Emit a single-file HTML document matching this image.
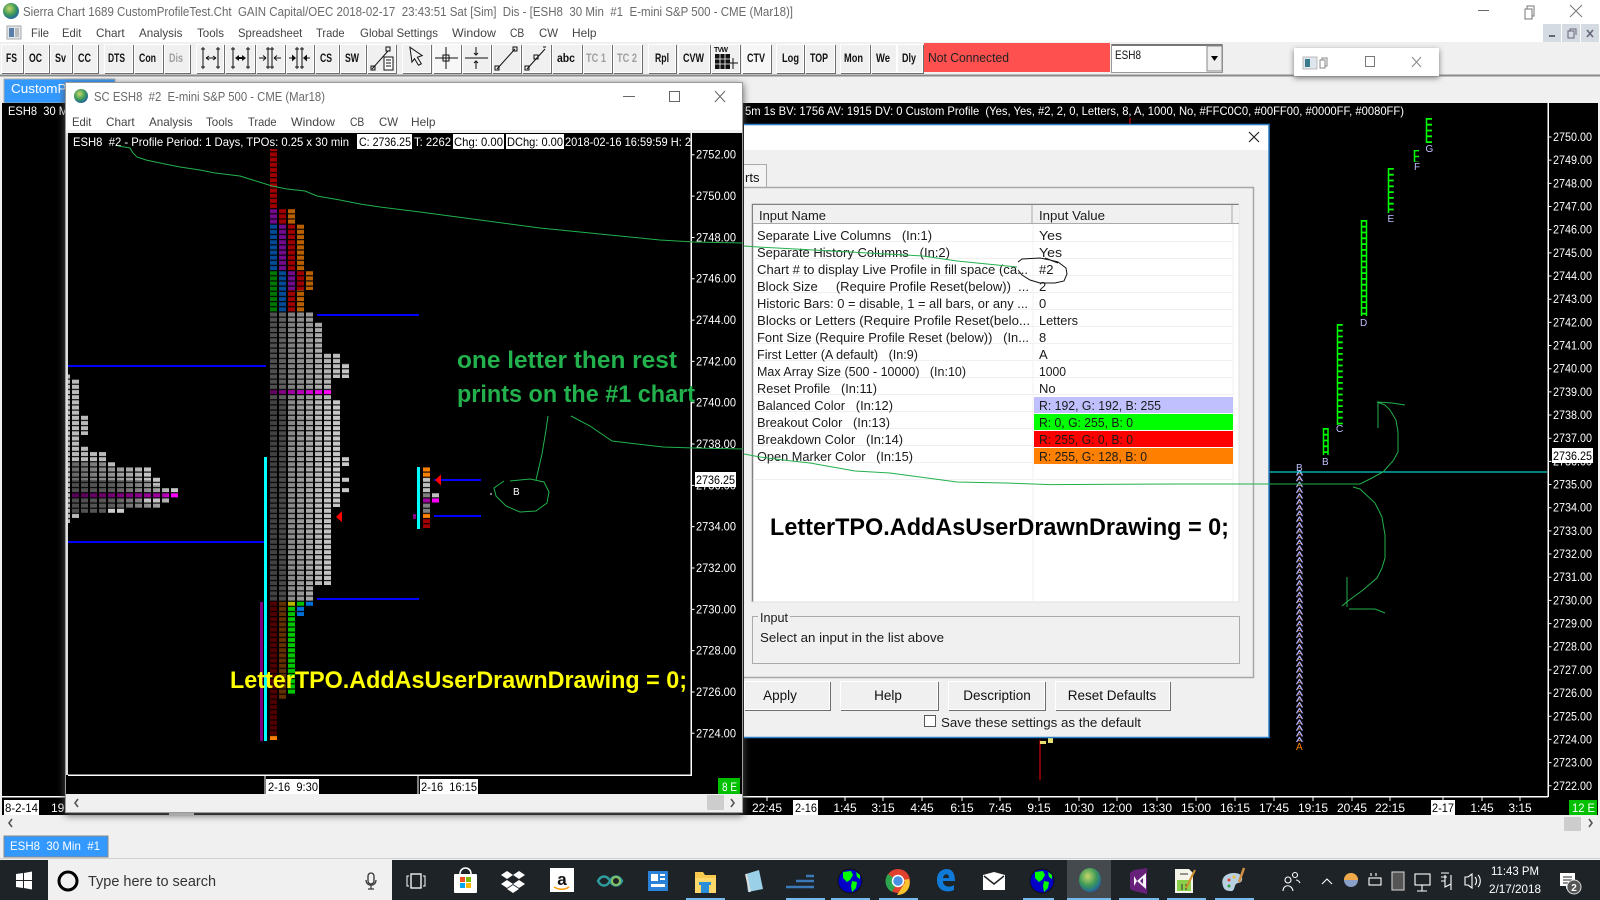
<!DOCTYPE html>
<html lang="en"><head><meta charset="utf-8"><title>Sierra Chart</title>
<style>
html,body{margin:0;padding:0;background:#f0f0f0;width:1600px;height:900px;overflow:hidden}
svg{display:block;position:absolute;left:0;top:0}
text{font-family:"Liberation Sans",sans-serif;font-size:12px;white-space:pre;fill:#fff}
.g{fill:#6a6a6a;font-size:12.5px}
.m{fill:#444;font-size:12px}
.tb{fill:#111;font-size:11.5px;font-weight:bold}
.dis{fill:#a0a0a0}
.k{fill:#000}
.l{fill:#1a1a1a;font-size:13px}
.bt{fill:#111;font-size:13.5px;text-anchor:middle}
.big{font-size:24px;font-weight:bold}
.tk{text-anchor:middle}
.ic{fill:none;stroke:#111;stroke-width:1}
.btn{filter:drop-shadow(1px 1px 0 #6e6e6e)}
.btn rect{fill:#f0f0f0;stroke:#fff;stroke-width:1}
.gl{fill:none;stroke:#22b14c;stroke-width:1}
.tl{fill:#c0c0ff;font-size:10px}
.gb{fill:none;stroke:#0f0}
</style></head><body>
<svg width="1600" height="900" viewBox="0 0 1600 900" xmlns="http://www.w3.org/2000/svg">
<defs>
<pattern id="st" width="9" height="5.165" patternUnits="userSpaceOnUse"><rect y="1.5" width="9" height="1.1" fill="#000"/></pattern>
<linearGradient id="lg" gradientUnits="userSpaceOnUse" x1="68" y1="0" x2="178" y2="0"><stop offset="0" stop-color="#4a4a4a"/><stop offset=".4" stop-color="#5a5a5a"/><stop offset=".7" stop-color="#8c8c8c"/><stop offset="1" stop-color="#c8c8c8"/></linearGradient>
<linearGradient id="lg2" gradientUnits="userSpaceOnUse" x1="68" y1="0" x2="150" y2="0"><stop offset="0" stop-color="#606060"/><stop offset="1" stop-color="#c0c0c0"/></linearGradient>
<linearGradient id="lm" gradientUnits="userSpaceOnUse" x1="68" y1="0" x2="178" y2="0"><stop offset="0" stop-color="#500050"/><stop offset=".85" stop-color="#a000a0"/><stop offset="1" stop-color="#ff00ff"/></linearGradient>
<radialGradient id="gb" cx=".4" cy=".35" r=".7"><stop offset="0" stop-color="#c8d86a"/><stop offset=".55" stop-color="#3f9a58"/><stop offset="1" stop-color="#1d5fa8"/></radialGradient>
<pattern id="pa" width="7" height="5.8" patternUnits="userSpaceOnUse" x="1296" y="470"><path d="M.5 5.5L3.5 .5L6.5 5.5" fill="none" stroke="#b0b0ff" stroke-width="1.300"/><path d="M2 3.800H5" stroke="#c08040" stroke-width=".9"/></pattern>
</defs>

<!-- main window chrome -->
<rect width="1600" height="42" fill="#fff"/>
<rect y="42" width="1600" height="61" fill="#f0f0f0"/>
<circle cx="11" cy="11" r="8" fill="url(#gb)"/>
<text x="23" y="16" class="g" textLength="770" lengthAdjust="spacingAndGlyphs">Sierra Chart 1689 CustomProfileTest.Cht  GAIN Capital/OEC 2018-02-17  23:43:51 Sat [Sim]  Dis - [ESH8  30 Min  #1  E-mini S&amp;P 500 - CME (Mar18)]</text>
<path d="M1478 10.500H1489" stroke="#666" fill="none"/>
<path d="M1525 9h7v10h-7zM1527 9V6h7v10h-2" stroke="#777" fill="none"/>
<path d="M1570 5l12 12M1582 5l-12 12" stroke="#777" fill="none"/>
<rect x="7" y="26" width="14" height="13" fill="#dfe6ee" stroke="#aaa"/><rect x="9" y="28" width="5" height="9" fill="#5b7fa8"/><rect x="15" y="28" width="4" height="9" fill="#bbb"/>
<text x="31" y="37" class="m" textLength="18" lengthAdjust="spacingAndGlyphs">File</text>
<text x="62" y="37" class="m" textLength="19.400" lengthAdjust="spacingAndGlyphs">Edit</text>
<text x="96" y="37" class="m" textLength="28.600" lengthAdjust="spacingAndGlyphs">Chart</text>
<text x="139" y="37" class="m" textLength="43.400" lengthAdjust="spacingAndGlyphs">Analysis</text>
<text x="197" y="37" class="m" textLength="27" lengthAdjust="spacingAndGlyphs">Tools</text>
<text x="238" y="37" class="m" textLength="64.300" lengthAdjust="spacingAndGlyphs">Spreadsheet</text>
<text x="316" y="37" class="m" textLength="28.600" lengthAdjust="spacingAndGlyphs">Trade</text>
<text x="360" y="37" class="m" textLength="78" lengthAdjust="spacingAndGlyphs">Global Settings</text>
<text x="452" y="37" class="m" textLength="44" lengthAdjust="spacingAndGlyphs">Window</text>
<text x="510" y="37" class="m" textLength="14.300" lengthAdjust="spacingAndGlyphs">CB</text>
<text x="539" y="37" class="m" textLength="19" lengthAdjust="spacingAndGlyphs">CW</text>
<text x="572" y="37" class="m" textLength="24.500" lengthAdjust="spacingAndGlyphs">Help</text>
<rect x="1543" y="24" width="18" height="18" fill="#d5dbe3"/><rect x="1562" y="24" width="18" height="18" fill="#d5dbe3"/><rect x="1581" y="24" width="18" height="18" fill="#d5dbe3"/>
<path d="M1549 36h6" stroke="#667" stroke-width="2"/><path d="M1568 31h6v7h-6zM1570 31v-2h6v6" stroke="#667" fill="none"/><path d="M1587 30l6 7M1593 30l-6 7" stroke="#667" stroke-width="1.600"/>

<!-- toolbar -->
<g class="btn">
<rect x="1.500" y="44.500" width="21" height="28"/><rect x="24.500" y="44.500" width="24" height="28"/><rect x="50.500" y="44.500" width="21" height="28"/><rect x="73.500" y="44.500" width="24" height="28"/>
<rect x="104.500" y="44.500" width="28" height="28"/><rect x="134.500" y="44.500" width="28" height="28"/><rect x="164.500" y="44.500" width="25" height="28"/>
<rect x="196.500" y="44.500" width="27" height="28"/><rect x="225.500" y="44.500" width="29" height="28"/><rect x="256.500" y="44.500" width="28" height="28"/><rect x="286.500" y="44.500" width="27" height="28"/><rect x="315.500" y="44.500" width="23" height="28"/><rect x="340.500" y="44.500" width="25" height="28"/><rect x="367.500" y="44.500" width="28" height="28"/>
<rect x="402.500" y="44.500" width="28" height="28"/><rect x="433.500" y="44.500" width="27" height="28" style="fill:#f7f7f7"/><rect x="462.500" y="44.500" width="28" height="28"/><rect x="492.500" y="44.500" width="28" height="28"/><rect x="522.500" y="44.500" width="28" height="28"/><rect x="552.500" y="44.500" width="29" height="28"/><rect x="583.500" y="44.500" width="28" height="28"/><rect x="613.500" y="44.500" width="28" height="28"/>
<rect x="648.500" y="44.500" width="27" height="28"/><rect x="678.500" y="44.500" width="31" height="28"/><rect x="711.500" y="44.500" width="28" height="28"/><rect x="742.500" y="44.500" width="28" height="28" style="fill:#f7f7f7"/>
<rect x="776.500" y="44.500" width="27" height="28"/><rect x="805.500" y="44.500" width="29" height="28"/><rect x="840.500" y="44.500" width="29" height="28"/><rect x="871.500" y="44.500" width="25" height="28"/><rect x="897.500" y="44.500" width="25" height="28"/>
</g>
<text class="tb" x="6" y="62" textLength="11" lengthAdjust="spacingAndGlyphs">FS</text>
<text class="tb" x="29" y="62" textLength="13" lengthAdjust="spacingAndGlyphs">OC</text>
<text class="tb" x="55" y="62" textLength="11" lengthAdjust="spacingAndGlyphs">Sv</text>
<text class="tb" x="78" y="62" textLength="13" lengthAdjust="spacingAndGlyphs">CC</text>
<text class="tb" x="108" y="62" textLength="17" lengthAdjust="spacingAndGlyphs">DTS</text>
<text class="tb" x="139" y="62" textLength="17" lengthAdjust="spacingAndGlyphs">Con</text>
<text class="tb dis" x="169" y="62" textLength="14" lengthAdjust="spacingAndGlyphs">Dis</text>
<text class="tb" x="320" y="62" textLength="12" lengthAdjust="spacingAndGlyphs">CS</text>
<text class="tb" x="345" y="62" textLength="14" lengthAdjust="spacingAndGlyphs">SW</text>
<text class="tb" x="557" y="62" textLength="18" lengthAdjust="spacingAndGlyphs">abc</text>
<text class="tb dis" x="586" y="62" textLength="20" lengthAdjust="spacingAndGlyphs">TC 1</text>
<text class="tb dis" x="617" y="62" textLength="20" lengthAdjust="spacingAndGlyphs">TC 2</text>
<text class="tb" x="655" y="62" textLength="14" lengthAdjust="spacingAndGlyphs">Rpl</text>
<text class="tb" x="683" y="62" textLength="21" lengthAdjust="spacingAndGlyphs">CVW</text>
<text class="tb" x="747" y="62" textLength="18" lengthAdjust="spacingAndGlyphs">CTV</text>
<text class="tb" x="782" y="62" textLength="17" lengthAdjust="spacingAndGlyphs">Log</text>
<text class="tb" x="810" y="62" textLength="18" lengthAdjust="spacingAndGlyphs">TOP</text>
<text class="tb" x="844" y="62" textLength="19" lengthAdjust="spacingAndGlyphs">Mon</text>
<text class="tb" x="876" y="62" textLength="14" lengthAdjust="spacingAndGlyphs">We</text>
<text class="tb" x="902" y="62" textLength="14" lengthAdjust="spacingAndGlyphs">Dly</text>
<!-- toolbar icons -->
<path class="ic" d="M203 47v22M218 47v22M201 49h4M216 49h4M201 67h4M216 67h4M206 58h10M206 58l3-2M206 58l3 2M216 58l-3-2M216 58l-3 2"/>
<path class="ic" d="M233 47v22M248 47v22M231 49h4M246 49h4M231 67h4M246 67h4"/><path d="M235 58l4-3v2h3v-2l4 3-4 3v-2h-3v2z" fill="#111"/>
<path class="ic" d="M268 47v22M272 47v22M266 49h4M270 49h4M266 67h4M270 67h4M259 58h7M266 58l-3-2.500M266 58l-3 2.500M281 58h-7M274 58l3-2.500M274 58l3 2.500"/>
<path class="ic" d="M297 47v22M302 47v22M295 49h4M300 49h4M295 67h4M300 67h4M289 58h4M310 58h-4"/><path d="M296 58l-4-3.500v7zM303 58l4-3.500v7z" fill="#111"/>
<path class="ic" d="M372 69l16-18M371 66h4v4h-4zM386 47h4v4h-4z"/><rect x="384" y="57" width="9" height="13" fill="#fff" stroke="#111"/><path d="M386 60h5M386 63h5M386 66h5" stroke="#111"/>
<path class="ic" d="M411 47v15l3-3 3 7 3-1-3-7 5-1z" transform="rotate(-8 412 55)"/>
<path class="ic" d="M446 47v22M435 58h23"/><rect x="443" y="55" width="6" height="6" fill="none" stroke="#111"/>
<path class="ic" d="M465 58h23M476 47v8M476 69v-8M474 53l2 2 2-2M474 63l2-2 2 2"/>
<path class="ic" d="M497 69l18-20M495 66h4v4h-4zM513 47h4v4h-4z"/>
<path class="ic" d="M527 69l18-20M525 66h4v4h-4zM534 55h4v4h-4zM543 47h3"/>
<rect x="715" y="54" width="15" height="15" fill="#111"/><path d="M715 59h15M715 64h15M720 54v15M725 54v15" stroke="#fff" stroke-width=".8"/><path d="M728 63h10M733 58v11" stroke="#111"/>
<text x="714" y="52" style="font-size:7px;font-weight:bold;fill:#111" textLength="14">TVW</text>
<rect x="924" y="43" width="186" height="29" fill="#ff5050"/>
<text x="928" y="62" style="fill:#222;font-size:12.500px" textLength="81" lengthAdjust="spacingAndGlyphs">Not Connected</text>
<rect x="1111.500" y="44.500" width="111" height="28" fill="#fff" stroke="#999"/><rect x="1112" y="44" width="110" height="2" fill="#777"/>
<text x="1115" y="59" style="fill:#111;font-size:12px" textLength="26" lengthAdjust="spacingAndGlyphs">ESH8</text>
<rect x="1207" y="46" width="15" height="25" fill="#eee" stroke="#888"/><path d="M1211 56h7l-3.500 5z" fill="#000"/>
<rect y="74.500" width="1600" height="2" fill="#8a8a8a"/>
<rect x="1294" y="48" width="145" height="28" fill="#fff" style="filter:drop-shadow(0 2px 3px #777)"/>
<rect x="1303" y="57" width="14" height="12" fill="#dfe6ee" stroke="#bbb"/><rect x="1305" y="59" width="5" height="8" fill="#3a7a8a"/>
<path d="M1320 60h5v8h-5zM1322 60v-2h5v8h-2" stroke="#888" fill="none"/>
<rect x="1365.500" y="56.500" width="9" height="10" fill="none" stroke="#777"/><path d="M1412 57l9 10M1421 57l-9 10" stroke="#888" fill="none"/>

<!-- tab and main chart -->
<rect x="4" y="79" width="111" height="24" fill="#3399ff" stroke="#aaa"/>
<text x="11" y="93" style="font-size:12.500px" textLength="60" lengthAdjust="spacingAndGlyphs">CustomPr</text>
<rect x="2" y="103" width="1596" height="712" fill="#000"/>
<text x="8" y="115" textLength="60" lengthAdjust="spacingAndGlyphs">ESH8  30 M</text>
<text x="745" y="115" textLength="659" lengthAdjust="spacingAndGlyphs">5m 1s BV: 1756 AV: 1915 DV: 0 Custom Profile  (Yes, Yes, #2, 2, 0, Letters, 8, A, 1000, No, #FFC0C0, #00FF00, #0000FF, #0080FF)</text>
<path d="M1130 118v6" stroke="#f00"/>
<rect x="1547.500" y="103" width="1.500" height="694" fill="#fff"/>
<rect x="2" y="796" width="1546" height="1.500" fill="#fff"/>
<line x1="1550" x2="1550" y1="136.500" y2="790" stroke="#fff" stroke-width="3" stroke-dasharray="1 22.170"/>
<g>
<text x="1553" y="141" textLength="39" lengthAdjust="spacingAndGlyphs">2750.00</text>
<text x="1553" y="164.200" textLength="39" lengthAdjust="spacingAndGlyphs">2749.00</text>
<text x="1553" y="187.300" textLength="39" lengthAdjust="spacingAndGlyphs">2748.00</text>
<text x="1553" y="210.500" textLength="39" lengthAdjust="spacingAndGlyphs">2747.00</text>
<text x="1553" y="233.700" textLength="39" lengthAdjust="spacingAndGlyphs">2746.00</text>
<text x="1553" y="256.900" textLength="39" lengthAdjust="spacingAndGlyphs">2745.00</text>
<text x="1553" y="280" textLength="39" lengthAdjust="spacingAndGlyphs">2744.00</text>
<text x="1553" y="303.200" textLength="39" lengthAdjust="spacingAndGlyphs">2743.00</text>
<text x="1553" y="326.400" textLength="39" lengthAdjust="spacingAndGlyphs">2742.00</text>
<text x="1553" y="349.500" textLength="39" lengthAdjust="spacingAndGlyphs">2741.00</text>
<text x="1553" y="372.700" textLength="39" lengthAdjust="spacingAndGlyphs">2740.00</text>
<text x="1553" y="395.900" textLength="39" lengthAdjust="spacingAndGlyphs">2739.00</text>
<text x="1553" y="419" textLength="39" lengthAdjust="spacingAndGlyphs">2738.00</text>
<text x="1553" y="442.200" textLength="39" lengthAdjust="spacingAndGlyphs">2737.00</text>
<text x="1553" y="465.400" textLength="39" lengthAdjust="spacingAndGlyphs">2736.00</text>
<text x="1553" y="488.600" textLength="39" lengthAdjust="spacingAndGlyphs">2735.00</text>
<text x="1553" y="511.700" textLength="39" lengthAdjust="spacingAndGlyphs">2734.00</text>
<text x="1553" y="534.900" textLength="39" lengthAdjust="spacingAndGlyphs">2733.00</text>
<text x="1553" y="558.100" textLength="39" lengthAdjust="spacingAndGlyphs">2732.00</text>
<text x="1553" y="581.200" textLength="39" lengthAdjust="spacingAndGlyphs">2731.00</text>
<text x="1553" y="604.400" textLength="39" lengthAdjust="spacingAndGlyphs">2730.00</text>
<text x="1553" y="627.600" textLength="39" lengthAdjust="spacingAndGlyphs">2729.00</text>
<text x="1553" y="650.700" textLength="39" lengthAdjust="spacingAndGlyphs">2728.00</text>
<text x="1553" y="673.900" textLength="39" lengthAdjust="spacingAndGlyphs">2727.00</text>
<text x="1553" y="697.100" textLength="39" lengthAdjust="spacingAndGlyphs">2726.00</text>
<text x="1553" y="720.300" textLength="39" lengthAdjust="spacingAndGlyphs">2725.00</text>
<text x="1553" y="743.400" textLength="39" lengthAdjust="spacingAndGlyphs">2724.00</text>
<text x="1553" y="766.600" textLength="39" lengthAdjust="spacingAndGlyphs">2723.00</text>
<text x="1553" y="789.800" textLength="39" lengthAdjust="spacingAndGlyphs">2722.00</text>
</g>
<rect x="1552" y="448" width="41" height="15" fill="#fff"/><text x="1553" y="460" class="k" textLength="39" lengthAdjust="spacingAndGlyphs">2736.25</text>
<!-- main chart TPO columns -->
<path class="gb" stroke-width="1.500" d="M1426.500 118V143M1414.500 150V162M1388.500 168V213M1361.500 220V316M1366.500 220V316M1337.500 324V425M1323.500 428V455M1328 428V455"/>
<path d="M1429 118V143" stroke="#0f0" stroke-width="6" stroke-dasharray="1.800 4"/>
<path d="M1416.500 150V162" stroke="#0f0" stroke-width="5" stroke-dasharray="1.400 4.400"/>
<path d="M1391 168V213" stroke="#0f0" stroke-width="5.500" stroke-dasharray="1.800 4"/>
<path d="M1364 220V316" stroke="#0f0" stroke-width="6" stroke-dasharray="1.800 4"/>
<path d="M1340 324V425" stroke="#0f0" stroke-width="5.500" stroke-dasharray="1.800 4"/>
<path d="M1326 428V455" stroke="#0f0" stroke-width="5" stroke-dasharray="1.800 4"/>
<text x="1425.500" y="152" class="tl">G</text>
<text x="1414" y="170" class="tl">F</text>
<text x="1387.500" y="222" class="tl">E</text>
<text x="1360" y="326" class="tl">D</text>
<text x="1336" y="432" class="tl">C</text>
<text x="1322" y="465" class="tl">B</text>
<rect x="1296" y="470" width="7" height="272" fill="url(#pa)"/><text x="1296" y="471" class="tl">B</text><text x="1296" y="750" class="tl" style="fill:#ff8000">A</text>
<rect x="1269" y="471.500" width="278" height="1" fill="#0ff"/>
<path class="gl" d="M1244 484H1360L1370 479 1383 472 1393 461 1398 452V432L1396 420 1390 410 1385 405 1377 402 1392 403 1405 405M1378 402V428"/>
<path class="gl" d="M1353 487L1360 489 1375 503 1382 517 1385 535V558L1382 568 1377 578 1363 590 1348 601 1342 606M1347 577V607M1349 609H1375L1385 613"/>
<path d="M1040 740v40" stroke="#f00"/><path d="M1040 741h6v3h-6zM1048 738h5v5h-5z" fill="#e8e070"/>
<!-- main time axis -->
<text x="767" y="812" class="tk">22:45</text><text x="845" y="812" class="tk">1:45</text><text x="883" y="812" class="tk">3:15</text><text x="922" y="812" class="tk">4:45</text><text x="962" y="812" class="tk">6:15</text><text x="1000" y="812" class="tk">7:45</text><text x="1039" y="812" class="tk">9:15</text><text x="1079" y="812" class="tk">10:30</text><text x="1117" y="812" class="tk">12:00</text><text x="1157" y="812" class="tk">13:30</text><text x="1196" y="812" class="tk">15:00</text><text x="1235" y="812" class="tk">16:15</text><text x="1274" y="812" class="tk">17:45</text><text x="1313" y="812" class="tk">19:15</text><text x="1352" y="812" class="tk">20:45</text><text x="1390" y="812" class="tk">22:15</text><text x="1482" y="812" class="tk">1:45</text><text x="1520" y="812" class="tk">3:15</text>
<path d="M845 797v4M883 797v4M922 797v4M962 797v4M1000 797v4M1039 797v4M1079 797v4M1117 797v4M1157 797v4M1196 797v4M1235 797v4M1274 797v4M1313 797v4M1352 797v4M1390 797v4M1443 797v4M1482 797v4M1520 797v4M767 797v4" stroke="#fff"/>
<rect x="4" y="800" width="35" height="15" fill="#fff"/><text x="5" y="812" class="k" textLength="33" lengthAdjust="spacingAndGlyphs">8-2-14</text>
<text x="51" y="812">19</text>
<rect x="793" y="800" width="25" height="15" fill="#fff"/><text x="795" y="812" class="k" textLength="22" lengthAdjust="spacingAndGlyphs">2-16</text>
<rect x="1431" y="800" width="24" height="15" fill="#fff"/><text x="1432" y="812" class="k" textLength="22" lengthAdjust="spacingAndGlyphs">2-17</text>
<rect x="1569" y="800" width="28" height="15" fill="#00c000"/><text x="1572" y="812" textLength="23" lengthAdjust="spacingAndGlyphs">12 E</text>
<!-- lower strip -->
<rect y="815" width="1600" height="45" fill="#f0f0f0"/>
<path d="M12 819l-3 4 3 4" fill="none" stroke="#555" stroke-width="1.600"/>
<rect x="1564" y="817" width="17" height="14" fill="#cdcdcd"/><path d="M1589 819l3 4-3 4" fill="none" stroke="#555" stroke-width="1.600"/>
<rect x="4" y="836" width="104" height="21" fill="#3399ff" stroke="#888"/>
<text x="10" y="850" textLength="90" lengthAdjust="spacingAndGlyphs">ESH8  30 Min  #1</text>
<rect y="858" width="1600" height="1" fill="#d0d0d0"/>

<!-- SC window -->
<g>
<rect x="65" y="82" width="678" height="731" fill="#fff" style="filter:drop-shadow(0 2px 4px #555)"/>
<rect x="65.500" y="82.500" width="677" height="730" fill="#f0f0f0" stroke="#9a9a9a"/>
<rect x="66" y="83" width="676" height="47" fill="#fff"/>
<circle cx="81" cy="96" r="7" fill="url(#gb)"/>
<text x="94" y="101" class="g" textLength="231" lengthAdjust="spacingAndGlyphs">SC ESH8  #2  E-mini S&amp;P 500 - CME (Mar18)</text>
<path d="M623 96.500h12" stroke="#666"/><rect x="669.500" y="91.500" width="10" height="10" fill="none" stroke="#666"/><path d="M715 91l10 11M725 91l-10 11" stroke="#666" fill="none"/>
<text x="72" y="126" class="m" textLength="19.400" lengthAdjust="spacingAndGlyphs">Edit</text>
<text x="106" y="126" class="m" textLength="28.600" lengthAdjust="spacingAndGlyphs">Chart</text>
<text x="149" y="126" class="m" textLength="43.400" lengthAdjust="spacingAndGlyphs">Analysis</text>
<text x="206" y="126" class="m" textLength="27" lengthAdjust="spacingAndGlyphs">Tools</text>
<text x="248" y="126" class="m" textLength="28.600" lengthAdjust="spacingAndGlyphs">Trade</text>
<text x="291" y="126" class="m" textLength="44" lengthAdjust="spacingAndGlyphs">Window</text>
<text x="350" y="126" class="m" textLength="14.300" lengthAdjust="spacingAndGlyphs">CB</text>
<text x="379" y="126" class="m" textLength="19" lengthAdjust="spacingAndGlyphs">CW</text>
<text x="411" y="126" class="m" textLength="24.500" lengthAdjust="spacingAndGlyphs">Help</text>
<rect x="66" y="133" width="676" height="661" fill="#000"/>
<rect x="66" y="133" width="2" height="642" fill="#ddd"/>
<rect x="68" y="774.500" width="623" height="1.500" fill="#fff"/>
<rect x="690.500" y="133" width="1.500" height="643" fill="#fff"/>
<line x1="693" x2="693" y1="154.300" y2="740" stroke="#fff" stroke-width="3" stroke-dasharray="1 40.320"/>

<!-- TPO left profile -->
<g>
<rect x="68" y="374" width="2" height="149" fill="#bbb"/>
<rect x="72" y="379" width="7" height="83" fill="#bbb"/>
<rect x="81" y="415" width="7" height="20" fill="#bbb"/><rect x="81" y="446" width="7" height="16" fill="#bbb"/>
<rect x="90" y="452" width="7" height="10" fill="#bbb"/><rect x="99" y="452" width="7" height="10" fill="#bbb"/><rect x="108" y="462" width="7" height="5" fill="#bbb"/>
<rect x="72" y="462" width="7" height="18" fill="url(#lg2)"/><rect x="81" y="462" width="7" height="18" fill="url(#lg2)"/><rect x="90" y="462" width="7" height="18" fill="url(#lg2)"/><rect x="99" y="462" width="7" height="18" fill="url(#lg2)"/><rect x="108" y="467" width="7" height="13" fill="url(#lg2)"/><rect x="117" y="467" width="7" height="13" fill="url(#lg2)"/><rect x="126" y="467" width="7" height="13" fill="url(#lg2)"/><rect x="135" y="467" width="7" height="13" fill="url(#lg2)"/><rect x="144" y="467" width="7" height="13" fill="#c4c4c4"/><rect x="153" y="477" width="7" height="8" fill="#c4c4c4"/>
<rect x="72" y="480" width="7" height="38" fill="url(#lg)"/><rect x="81" y="480" width="7" height="33" fill="url(#lg)"/><rect x="90" y="480" width="7" height="33" fill="url(#lg)"/><rect x="99" y="480" width="7" height="33" fill="url(#lg)"/><rect x="108" y="480" width="7" height="33" fill="url(#lg)"/><rect x="117" y="480" width="7" height="33" fill="url(#lg)"/><rect x="126" y="480" width="7" height="28" fill="url(#lg)"/><rect x="135" y="480" width="7" height="28" fill="url(#lg)"/><rect x="144" y="480" width="7" height="28" fill="url(#lg)"/><rect x="153" y="485" width="7" height="23" fill="url(#lg)"/><rect x="162" y="488" width="7" height="15" fill="url(#lg)"/><rect x="171" y="488" width="7" height="5" fill="#c8c8c8"/>
<rect x="72" y="493" width="97" height="5" fill="url(#lm)"/><rect x="171" y="493" width="7" height="5" fill="#f0f"/>
<path d="M79 488v30M88 488v30M97 488v30M106 488v30M115 488v30M124 488v30M133 488v30M142 488v30M151 488v30M160 488v30" stroke="#000" stroke-width="2" transform="translate(1 0)"/>
<rect x="72" y="513" width="7" height="5" fill="#bbb"/><rect x="108" y="508" width="7" height="5" fill="#ccc"/><rect x="117" y="508" width="7" height="5" fill="#ccc"/><rect x="144" y="498" width="7" height="5" fill="#c4c4c4"/><rect x="153" y="498" width="7" height="5" fill="#c4c4c4"/>
</g>
<!-- TPO main profile -->
<g>
<rect x="270" y="149" width="7" height="60" fill="#a00000"/><rect x="270" y="209" width="7" height="15" fill="#720a8c"/><rect x="270" y="224" width="7" height="47" fill="#004a96"/><rect x="270" y="271" width="7" height="41" fill="#007800"/><rect x="270" y="312" width="7" height="88" fill="#505050"/><rect x="270" y="400" width="7" height="201" fill="#424242"/><rect x="270" y="601" width="7" height="134" fill="#500000"/><rect x="270" y="735" width="7" height="5" fill="#ff8000"/>
<rect x="279" y="209" width="7" height="15" fill="#a00000"/><rect x="279" y="224" width="7" height="47" fill="#720a8c"/><rect x="279" y="271" width="7" height="41" fill="#004a96"/><rect x="279" y="312" width="7" height="88" fill="#606060"/><rect x="279" y="400" width="7" height="201" fill="#4a4a4a"/><rect x="279" y="601" width="7" height="98" fill="#643000"/>
<rect x="288" y="209" width="7" height="15" fill="#b86000"/><rect x="288" y="224" width="7" height="47" fill="#a00000"/><rect x="288" y="271" width="7" height="19" fill="#720a8c"/><rect x="288" y="290" width="7" height="22" fill="#a00000"/><rect x="288" y="312" width="7" height="88" fill="#808080"/><rect x="288" y="400" width="7" height="201" fill="#8a8a8a"/><rect x="288" y="601" width="7" height="5" fill="#b8b800"/><rect x="288" y="606" width="7" height="88" fill="#00c800"/>
<rect x="297" y="224" width="7" height="47" fill="#b86000"/><rect x="297" y="271" width="7" height="19" fill="#a00000"/><rect x="297" y="290" width="7" height="22" fill="#b86000"/><rect x="297" y="312" width="7" height="88" fill="#8c8c8c"/><rect x="297" y="400" width="7" height="201" fill="#989898"/><rect x="297" y="601" width="7" height="5" fill="#00c000"/><rect x="297" y="606" width="7" height="10" fill="#0070d8"/>
<rect x="306" y="271" width="7" height="19" fill="#b86000"/><rect x="306" y="312" width="7" height="88" fill="#999"/><rect x="306" y="400" width="7" height="201" fill="#a8a8a8"/><rect x="306" y="601" width="7" height="5" fill="#0070d8"/>
<rect x="315" y="322" width="7" height="78" fill="#aaa"/><rect x="315" y="400" width="7" height="185" fill="#b8b8b8"/>
<rect x="324" y="353" width="7" height="47" fill="#b4b4b4"/><rect x="324" y="400" width="7" height="185" fill="#c4c4c4"/>
<rect x="333" y="353" width="7" height="25" fill="#bcbcbc"/><rect x="333" y="400" width="7" height="107" fill="#c8c8c8"/>
<rect x="342" y="363" width="7" height="15" fill="#c4c4c4"/><rect x="342" y="457" width="7" height="9" fill="#c8c8c8"/><rect x="342" y="477" width="7" height="5" fill="#c8c8c8"/><rect x="342" y="488" width="7" height="5" fill="#c8c8c8"/>
<rect x="270" y="390" width="7" height="5" fill="#600060"/><rect x="279" y="390" width="7" height="5" fill="#800080"/><rect x="288" y="390" width="7" height="5" fill="#a000a0"/><rect x="297" y="390" width="7" height="5" fill="#b800b8"/><rect x="306" y="390" width="7" height="5" fill="#d000d0"/><rect x="315" y="390" width="7" height="5" fill="#e800e8"/><rect x="324" y="390" width="7" height="5" fill="#f0f"/>
<!-- small right profile -->
<rect x="423" y="467" width="7" height="11" fill="#ff8000"/><rect x="423" y="478" width="7" height="15" fill="#c0c0c0"/><rect x="423" y="493" width="7" height="5" fill="#808080"/><rect x="432" y="493" width="7" height="5" fill="#c0c0c0"/><rect x="423" y="498" width="7" height="5" fill="#a000a0"/><rect x="432" y="498" width="7" height="5" fill="#f0f"/><rect x="423" y="503" width="7" height="10" fill="#808080"/><rect x="423" y="513" width="7" height="5" fill="#ff8000"/><rect x="423" y="518" width="7" height="10" fill="#a00000"/>
</g>
<rect x="68" y="149" width="375" height="592" fill="url(#st)"/>
<rect x="68" y="365" width="198" height="2" fill="#00f"/>
<rect x="68" y="541" width="196" height="2" fill="#00f"/>
<rect x="317" y="314" width="102" height="2" fill="#00f"/>
<rect x="317" y="598" width="102" height="2" fill="#00f"/>
<rect x="434" y="479" width="47" height="2" fill="#00f"/>
<rect x="434" y="515" width="47" height="2" fill="#00f"/>
<rect x="260" y="602" width="3" height="139" fill="#800080"/>
<rect x="264" y="457" width="3" height="284" fill="#0ff"/>
<rect x="417" y="467" width="3" height="62" fill="#0ff"/>
<rect x="413" y="514" width="3" height="5" fill="#800080"/>
<path d="M336 517l6-6v11zM435 480l6-5.500v11z" fill="#f00"/>

<!-- SC header text -->
<text x="73" y="146" textLength="276" lengthAdjust="spacingAndGlyphs">ESH8  #2 - Profile Period: 1 Days, TPOs: 0.25 x 30 min</text>
<rect x="357" y="134" width="55" height="15" fill="#fff"/><text x="359" y="146" class="k" textLength="52" lengthAdjust="spacingAndGlyphs">C: 2736.25</text>
<text x="414" y="146" textLength="37" lengthAdjust="spacingAndGlyphs">T: 2262</text>
<rect x="453" y="134" width="51" height="15" fill="#fff"/><text x="454" y="146" class="k" textLength="49" lengthAdjust="spacingAndGlyphs">Chg: 0.00</text>
<rect x="506" y="134" width="58" height="15" fill="#fff"/><text x="507" y="146" class="k" textLength="56" lengthAdjust="spacingAndGlyphs">DChg: 0.00</text>
<text x="565" y="146" textLength="126" lengthAdjust="spacingAndGlyphs">2018-02-16 16:59:59 H: 2</text>
<!-- SC axis -->
<text x="696" y="158.700" textLength="40" lengthAdjust="spacingAndGlyphs">2752.00</text>
<text x="696" y="200" textLength="40" lengthAdjust="spacingAndGlyphs">2750.00</text>
<text x="696" y="241.400" textLength="40" lengthAdjust="spacingAndGlyphs">2748.00</text>
<text x="696" y="282.700" textLength="40" lengthAdjust="spacingAndGlyphs">2746.00</text>
<text x="696" y="324" textLength="40" lengthAdjust="spacingAndGlyphs">2744.00</text>
<text x="696" y="365.400" textLength="40" lengthAdjust="spacingAndGlyphs">2742.00</text>
<text x="696" y="406.700" textLength="40" lengthAdjust="spacingAndGlyphs">2740.00</text>
<text x="696" y="448" textLength="40" lengthAdjust="spacingAndGlyphs">2738.00</text>
<text x="696" y="489.400" textLength="40" lengthAdjust="spacingAndGlyphs">2736.00</text>
<text x="696" y="530.700" textLength="40" lengthAdjust="spacingAndGlyphs">2734.00</text>
<text x="696" y="572" textLength="40" lengthAdjust="spacingAndGlyphs">2732.00</text>
<text x="696" y="613.300" textLength="40" lengthAdjust="spacingAndGlyphs">2730.00</text>
<text x="696" y="654.700" textLength="40" lengthAdjust="spacingAndGlyphs">2728.00</text>
<text x="696" y="696" textLength="40" lengthAdjust="spacingAndGlyphs">2726.00</text>
<text x="696" y="737.300" textLength="40" lengthAdjust="spacingAndGlyphs">2724.00</text>
<rect x="695" y="472" width="41" height="15" fill="#fff"/><text x="696" y="484" class="k" textLength="39" lengthAdjust="spacingAndGlyphs">2736.25</text>
<!-- SC bottom -->
<path d="M265 775v19M418 775v19" stroke="#fff"/>
<rect x="266" y="779" width="53" height="15" fill="#fff"/><text x="268" y="791" class="k" textLength="50" lengthAdjust="spacingAndGlyphs">2-16  9:30</text>
<rect x="420" y="779" width="58" height="15" fill="#fff"/><text x="421" y="791" class="k" textLength="56" lengthAdjust="spacingAndGlyphs">2-16  16:15</text>
<rect x="718" y="778" width="22" height="16" fill="#00c000"/><text x="722" y="791" textLength="15" lengthAdjust="spacingAndGlyphs">8 E</text>
<rect x="66" y="794" width="676" height="18" fill="#f0f0f0"/>
<path d="M78 799l-3 4 3 4M731 799l3 4-3 4" fill="none" stroke="#555" stroke-width="1.600"/>
<rect x="707" y="795" width="17" height="15" fill="#cdcdcd"/>
<rect x="169" y="813" width="25" height="2" fill="#aaa"/>
</g>

<!-- Green annotations over SC -->
<text x="457" y="368" class="big" style="fill:#22b14c" textLength="220" lengthAdjust="spacingAndGlyphs">one letter then rest</text>
<text x="457" y="402" class="big" style="fill:#22b14c" textLength="238" lengthAdjust="spacingAndGlyphs">prints on the #1 chart</text>
<text x="230" y="688" class="big" style="fill:#ff0" textLength="457" lengthAdjust="spacingAndGlyphs">LetterTPO.AddAsUserDrawnDrawing = 0;</text>
<path class="gl" d="M548 416L546 430 542 454 536 480"/>
<path class="gl" d="M510 481L530 479 544 482 549 492 547 503 536 511 520 512 506 506 496 496 494 488 504 481"/>
<path d="M490 494h2" stroke="#fff"/>
<text x="513" y="495" style="font-size:10px">B</text>
<path class="gl" d="M118 146L130 148 133 153 137 157 146 160 165 164 180 167 200 170 215 173 240 176 272 186 287 189 305 191 317 196 340 200 360 204 380 207 420 212 480 220 540 228 600 234 660 240 694 242 743 243"/>
<path class="gl" d="M571 416L590 426 612 441 663 447 694 448 743 449"/>

<!-- Dialog -->
<rect x="744" y="124" width="525" height="614" fill="#f0f0f0"/>
<path d="M744 124.500H1269V737.500H744" fill="none" stroke="#2b7fc8" stroke-width="1.500"/>
<rect x="744" y="125.500" width="524" height="24.500" fill="#fff"/>
<path d="M1249 132l10 10M1259 132l-10 10" stroke="#222" stroke-width="1.200"/>
<rect x="744" y="164" width="23" height="23" fill="#f4f4f4"/>
<path d="M744 164.500H766.500V187" fill="none" stroke="#aaa"/>
<text x="745" y="182" style="fill:#111;font-size:13px">rts</text>
<path d="M744 187.500H1253.500V677.500H744" fill="none" stroke="#a8a8a8" stroke-width="1.500"/>
<rect x="752" y="204" width="487" height="398" fill="#fff"/>
<path d="M752.500 602V204.500H1239" fill="none" stroke="#808080" stroke-width="1.500"/>
<path d="M1239 204V602H752" fill="none" stroke="#e0e0e0"/>
<rect x="753" y="205" width="486" height="19" fill="#f0f0f0"/>
<path d="M753 223.500H1239M1032 205V224M1232 205V224" stroke="#aaa"/>
<path d="M1033 224V602M1233 224V602" stroke="#f0f0f0"/>
<path d="M753 241.500H1233M753 258.500H1233M753 275.500H1233M753 292.500H1233M753 309.500H1233M753 326.500H1233M753 343.500H1233M753 360.500H1233M753 377.500H1233M753 394.500H1233M753 411.500H1233M753 428.500H1233M753 445.500H1233M753 462.500H1233M753 479.500H1233" stroke="#f0f0f0"/>
<rect x="1034" y="397" width="199" height="16" fill="#c0c0ff"/>
<rect x="1034" y="414" width="199" height="16" fill="#0f0"/>
<rect x="1034" y="431" width="199" height="16" fill="#f00"/>
<rect x="1034" y="448" width="199" height="16" fill="#ff8000"/>
<text x="759" y="220" class="l" textLength="67" lengthAdjust="spacingAndGlyphs">Input Name</text>
<text x="1039" y="220" class="l" textLength="66" lengthAdjust="spacingAndGlyphs">Input Value</text>
<text x="757" y="240" class="l" textLength="175" lengthAdjust="spacingAndGlyphs">Separate Live Columns   (In:1)</text>
<text x="757" y="257" class="l" textLength="193" lengthAdjust="spacingAndGlyphs">Separate History Columns   (In:2)</text>
<text x="757" y="274" class="l" textLength="271" lengthAdjust="spacingAndGlyphs">Chart # to display Live Profile in fill space (ca...</text>
<text x="757" y="291" class="l" textLength="272" lengthAdjust="spacingAndGlyphs">Block Size     (Require Profile Reset(below))  ...</text>
<text x="757" y="308" class="l" textLength="271" lengthAdjust="spacingAndGlyphs">Historic Bars: 0 = disable, 1 = all bars, or any ...</text>
<text x="757" y="325" class="l" textLength="273" lengthAdjust="spacingAndGlyphs">Blocks or Letters (Require Profile Reset(belo...</text>
<text x="757" y="342" class="l" textLength="272" lengthAdjust="spacingAndGlyphs">Font Size (Require Profile Reset (below))   (In...</text>
<text x="757" y="359" class="l" textLength="161" lengthAdjust="spacingAndGlyphs">First Letter (A default)   (In:9)</text>
<text x="757" y="376" class="l" textLength="209" lengthAdjust="spacingAndGlyphs">Max Array Size (500 - 10000)   (In:10)</text>
<text x="757" y="393" class="l" textLength="120" lengthAdjust="spacingAndGlyphs">Reset Profile   (In:11)</text>
<text x="757" y="410" class="l" textLength="136" lengthAdjust="spacingAndGlyphs">Balanced Color   (In:12)</text>
<text x="757" y="427" class="l" textLength="133" lengthAdjust="spacingAndGlyphs">Breakout Color   (In:13)</text>
<text x="757" y="444" class="l" textLength="146" lengthAdjust="spacingAndGlyphs">Breakdown Color   (In:14)</text>
<text x="757" y="461" class="l" textLength="156" lengthAdjust="spacingAndGlyphs">Open Marker Color   (In:15)</text>
<text x="1039" y="240" class="l" textLength="23" lengthAdjust="spacingAndGlyphs">Yes</text>
<text x="1039" y="257" class="l" textLength="23" lengthAdjust="spacingAndGlyphs">Yes</text>
<text x="1039" y="274" class="l">#2</text>
<text x="1039" y="291" class="l">2</text>
<text x="1039" y="308" class="l">0</text>
<text x="1039" y="325" class="l" textLength="39" lengthAdjust="spacingAndGlyphs">Letters</text>
<text x="1039" y="342" class="l">8</text>
<text x="1039" y="359" class="l">A</text>
<text x="1039" y="376" class="l" textLength="27" lengthAdjust="spacingAndGlyphs">1000</text>
<text x="1039" y="393" class="l">No</text>
<text x="1039" y="410" class="l" textLength="122" lengthAdjust="spacingAndGlyphs">R: 192, G: 192, B: 255</text>
<text x="1039" y="427" class="l" textLength="94" lengthAdjust="spacingAndGlyphs">R: 0, G: 255, B: 0</text>
<text x="1039" y="444" class="l" textLength="94" lengthAdjust="spacingAndGlyphs">R: 255, G: 0, B: 0</text>
<text x="1039" y="461" class="l" textLength="108" lengthAdjust="spacingAndGlyphs">R: 255, G: 128, B: 0</text>
<path d="M1018 262L1022 259 1040 258 1050 260 1058 262 1066 268 1067 274 1064 281 1055 283 1040 283 1030 280 1022 275 1018 270M1045 258L1058 263" fill="none" stroke="#111" stroke-width="1"/>
<path class="gl" d="M744 246L758 247 777 248 850 252 923 256 957 261 1017 267"/>
<path class="gl" d="M744 454L760 457 783 460 810 463 855 471 890 473 957 482 1005 483 1050 484.600 1180 484 1269 484"/>
<text x="770" y="535" class="big" style="fill:#000" textLength="459" lengthAdjust="spacingAndGlyphs">LetterTPO.AddAsUserDrawnDrawing = 0;</text>
<rect x="752.500" y="616.500" width="487" height="47" fill="none" stroke="#aaa"/>
<rect x="758" y="610" width="32" height="12" fill="#f0f0f0"/>
<text x="760" y="622" class="l" textLength="28" lengthAdjust="spacingAndGlyphs">Input</text>
<text x="760" y="642" class="l" textLength="184" lengthAdjust="spacingAndGlyphs">Select an input in the list above</text>
<g class="btn">
<rect x="744.500" y="681.500" width="85" height="28"/><rect x="840.500" y="681.500" width="97" height="28"/><rect x="948.500" y="681.500" width="96" height="28"/><rect x="1055.500" y="681.500" width="114" height="28"/>
</g>
<text x="780" y="700" class="bt">Apply</text><text x="888" y="700" class="bt">Help</text><text x="997" y="700" class="bt">Description</text><text x="1112" y="700" class="bt">Reset Defaults</text>
<rect x="924.500" y="715.500" width="11" height="11" fill="#fff" stroke="#555"/>
<text x="941" y="727" class="l" textLength="200" lengthAdjust="spacingAndGlyphs">Save these settings as the default</text>

<!-- Taskbar -->
<rect y="860" width="1600" height="40" fill="#1e2327"/>
<path d="M16 874l7-1v7h-7zM24 873l8-1.500V880h-8zM16 881h7v7l-7-1zM24 881h8v8.500l-8-1.500z" fill="#fff"/>
<rect x="48" y="860" width="344" height="40" fill="#f0f0f0"/>
<circle cx="68" cy="881" r="9" fill="none" stroke="#000" stroke-width="3"/>
<text x="88" y="886" style="font-size:15px;fill:#333" textLength="128" lengthAdjust="spacingAndGlyphs">Type here to search</text>
<rect x="368" y="873" width="6" height="11" rx="3" fill="none" stroke="#333" stroke-width="1.300"/><path d="M366 880c0 7 10 7 10 0M371 886v3M368 889h6" fill="none" stroke="#333" stroke-width="1.200"/>
<rect x="411" y="874" width="10" height="14" fill="none" stroke="#fff" stroke-width="1.300"/><path d="M409 876h-2v10h2M423 876h2v10h-2" fill="none" stroke="#fff"/>
<rect x="454" y="874" width="23" height="19" rx="1" fill="#fff"/><path d="M460 874c0-8 11-8 11 0" fill="none" stroke="#fff" stroke-width="1.600"/><rect x="460" y="877" width="5" height="5" fill="#f25022"/><rect x="466" y="877" width="5" height="5" fill="#7fba00"/><rect x="460" y="883" width="5" height="5" fill="#00a4ef"/><rect x="466" y="883" width="5" height="5" fill="#ffb900"/>
<path d="M507 871l6 4-6 4-6-4zM519 871l6 4-6 4-6-4zM507 880l6 4-6 4-6-4zM519 880l6 4-6 4-6-4zM513 885l6 4-6 4-6-4z" fill="#fff"/>
<rect x="550" y="868" width="24" height="24" fill="#fff"/><text x="562" y="885" style="font-size:17px;font-weight:bold;fill:#111;text-anchor:middle">a</text><path d="M554 887c5 3 11 3 15 0" fill="none" stroke="#f90" stroke-width="1.500"/>
<path d="M601 881c3-6 9-6 12 0s9 6 12 0c-3-6-9-6-12 0s-9 6-12 0z" transform="translate(-3 0)" fill="none" stroke="#2f9e9e" stroke-width="2.400"/><circle cx="616" cy="881" r="4" fill="none" stroke="#8cc060" stroke-width="2"/>
<rect x="648" y="871" width="20" height="20" fill="#2a82d8"/><rect x="651" y="874" width="7" height="7" fill="#fff"/><rect x="660" y="874" width="5" height="2" fill="#fff"/><rect x="660" y="878" width="5" height="2" fill="#fff"/><rect x="651" y="884" width="14" height="3" fill="#fff"/>
<path d="M695 872h8l2 3h11v18h-21z" fill="#f8c94f"/><rect x="695" y="878" width="21" height="15" fill="#ffd86b"/><rect x="701" y="884" width="8" height="9" fill="#2a8ed8"/><rect x="699" y="882" width="12" height="3" fill="#2a8ed8"/>
<path d="M746 874l13-4 4 19-15 3z" fill="#9ad0e8"/><path d="M746 874l4 18" stroke="#ddd" stroke-width="2"/>
<path d="M786 887h28M796 881h18M806 876h8" stroke="#3a7ab8" stroke-width="2.500"/>
<circle cx="850" cy="881" r="12" fill="#0000c8" stroke="#111"/><path d="M843 872l8-1 2 4-3 5-3 2-4-4zM852 881l5 1-1 6-4 4-1-6zM856 872l4 3 0 4-3-2z" fill="#0f0"/>
<circle cx="898" cy="881" r="12" fill="#e04030"/><path d="M898 881l-6 11a12 12 0 0 1-4-18z" fill="#2da44e"/><path d="M898 881l6-2 1 4-1 1-7 11a12 12 0 0 0 12-16z" fill="#f8c32e"/><circle cx="898" cy="881" r="5.500" fill="#4a90e2" stroke="#fff" stroke-width="1.500"/>
<path d="M937 880c0-8 5-11 10-11s8 4 8 12h-12c0 6 7 7 11 4v5c-6 3-17 2-17-10zM943 878h6c0-5-5-5-6 0z" fill="#0f7ad8"/>
<path d="M983 875l11-3 11 3v15h-22z" fill="#fff"/><path d="M984 876l10 8 10-8" fill="none" stroke="#1e2327" stroke-width="1.500"/>
<circle cx="1042" cy="881" r="12" fill="#0000c8" stroke="#111"/><path d="M1035 872l8-1 2 4-3 5-3 2-4-4zM1044 881l5 1-1 6-4 4-1-6zM1048 872l4 3 0 4-3-2z" fill="#0f0"/>
<rect x="1067" y="860" width="44" height="40" fill="#454a4e"/>
<ellipse cx="1090" cy="880" rx="11" ry="12" fill="url(#gb)"/>
<path d="M1130 873l4-3 13-2v26l-13-3-4-2z" fill="#68217a"/><path d="M1134 876l3 5-3 5v-10zM1146 873l-9 8 9 8z" fill="#fff" fill-opacity=".95"/><path d="M1143 878l-3 3 3 3z" fill="#68217a"/>
<path d="M1175 869h14l4 4v20h-18z" fill="#f4f4e8"/><rect x="1177" y="880" width="14" height="11" fill="#8ad048"/><path d="M1180 874h8M1182 884v6M1186 884v6" stroke="#333"/><path d="M1186 888l9-18" stroke="#d09030" stroke-width="2"/>
<path d="M1223 886c-3-9 4-13 11-13 6 0 9 3 8 7s-4 2-6 4-1 8-6 7c-3 0-6-1-7-5z" fill="#b8d0e0"/><circle cx="1229" cy="880" r="1.500" fill="#e04040"/><circle cx="1234" cy="877" r="1.500" fill="#f0c030"/><circle cx="1229" cy="886" r="1.500" fill="#30a040"/><path d="M1239 882l5-14" stroke="#d09040" stroke-width="2.500"/>
<g fill="none" stroke="#fff" stroke-width="1.100">
<circle cx="1288" cy="880" r="3"/><path d="M1283 891c0-7 9-7 10 0"/><circle cx="1295" cy="875" r="2.500"/><path d="M1296 880c2 0 3 1 4 3"/>
<path d="M1322 884l5-5 5 5"/>
<rect x="1369" y="878" width="12" height="7"/><path d="M1371 876v-3M1376 876v-3"/>
<rect x="1392" y="872" width="12" height="18" fill="#555" stroke="#ccc"/>
<rect x="1415" y="874" width="15" height="11"/><path d="M1422 885v6M1417 891h10"/><path d="M1441 873h8M1441 877h6M1441 881h4M1451 884l-6 3v-12M1451 875v15"/>
<path d="M1465 877h3l4-3v14l-4-3h-3zM1475 877c2 2 2 6 0 8M1478 875c3 3 3 9 0 12"/>
</g>
<circle cx="1351" cy="880" r="7" fill="#8aa0c8"/><path d="M1344 880a7 7 0 0 1 14 0z" fill="#f0a848"/>
<text x="1515" y="875" style="text-anchor:middle" textLength="48" lengthAdjust="spacingAndGlyphs">11:43 PM</text>
<text x="1515" y="893" style="text-anchor:middle" textLength="52" lengthAdjust="spacingAndGlyphs">2/17/2018</text>
<path d="M1560 873h15v13h-6l-3 3v-3h-6z" fill="#fff"/><path d="M1563 877h9M1563 880h9M1563 883h6" stroke="#222"/>
<circle cx="1574" cy="887" r="7" fill="#555" stroke="#ddd"/><text x="1574" y="891" style="text-anchor:middle;font-size:10px;font-weight:bold">2</text>
<g fill="#76b9ed"><rect x="686" y="898" width="39" height="2"/><rect x="786" y="898" width="39" height="2"/><rect x="831" y="898" width="39" height="2"/><rect x="879" y="898" width="39" height="2"/><rect x="1023" y="898" width="31" height="2"/><rect x="1067" y="898" width="44" height="2"/><rect x="1119" y="898" width="40" height="2"/><rect x="1167" y="898" width="39" height="2"/><rect x="1215" y="898" width="39" height="2"/></g>
</svg>
</body></html>
